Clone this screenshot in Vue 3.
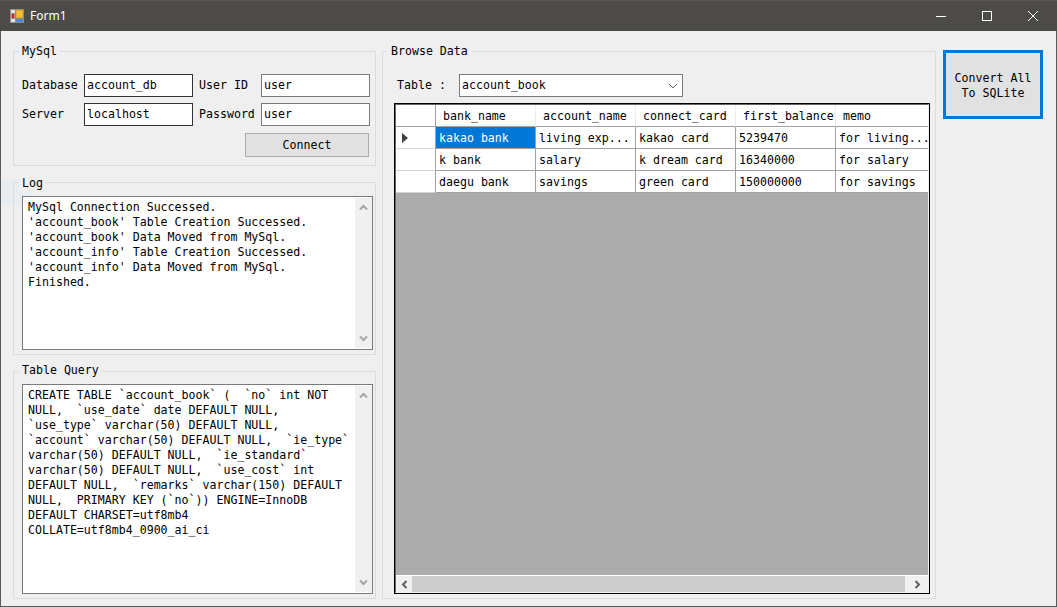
<script setup>
const logLines = [
  'MySql Connection Successed.',
  "'account_book' Table Creation Successed.",
  "'account_book' Data Moved from MySql.",
  "'account_info' Table Creation Successed.",
  "'account_info' Data Moved from MySql.",
  'Finished.'
]
const queryLines = [
  'CREATE TABLE `account_book` (  `no` int NOT',
  'NULL,  `use_date` date DEFAULT NULL,',
  '`use_type` varchar(50) DEFAULT NULL,',
  '`account` varchar(50) DEFAULT NULL,  `ie_type`',
  'varchar(50) DEFAULT NULL,  `ie_standard`',
  'varchar(50) DEFAULT NULL,  `use_cost` int',
  'DEFAULT NULL,  `remarks` varchar(150) DEFAULT',
  'NULL,  PRIMARY KEY (`no`)) ENGINE=InnoDB',
  'DEFAULT CHARSET=utf8mb4',
  'COLLATE=utf8mb4_0900_ai_ci'
]
const columns = ['bank_name', 'account_name', 'connect_card', 'first_balance', 'memo']
const rows = [
  ['kakao bank', 'living exp...', 'kakao card', '5239470', 'for living...'],
  ['k bank', 'salary', 'k dream card', '16340000', 'for salary'],
  ['daegu bank', 'savings', 'green card', '150000000', 'for savings']
]
</script>

<template>
  <div class="win">
    <div class="patch"></div>
    <header class="titlebar">
      <svg class="appicon" width="14" height="14" viewBox="0 0 14 14">
        <rect x="0.5" y="0.5" width="13" height="13" fill="#e4e4e4" stroke="#8f8f8f" />
        <path d="M0.5 4.5H6M5.5 0.5V13.5M0.5 9.5H13.5" stroke="#8f8f8f" fill="none" />
        <rect x="1.5" y="5" width="3" height="4" fill="#c8281e" />
        <rect x="6" y="1" width="7" height="8" fill="#f6bd2c" stroke="#b98a16" stroke-width="0.6" />
        <rect x="6" y="10" width="7" height="3" fill="#4f86d8" />
      </svg>
      <span class="title">Form1</span>
      <div class="controls">
        <div class="ctl">
          <svg width="12" height="12" viewBox="0 0 12 12"><path d="M1 6.5H11" stroke="#fff" fill="none" /></svg>
        </div>
        <div class="ctl">
          <svg width="12" height="12" viewBox="0 0 12 12"><rect x="1.5" y="1.5" width="9" height="9" stroke="#fff" fill="none" /></svg>
        </div>
        <div class="ctl">
          <svg width="12" height="12" viewBox="0 0 12 12"><path d="M1 1L11 11M11 1L1 11" stroke="#fff" fill="none" /></svg>
        </div>
      </div>
    </header>

    <main class="body">
      <div class="left">
        <section class="group mysql">
          <span class="legend">MySql</span>
          <div class="form">
            <label>Database</label>
            <div class="input dark">account_db</div>
            <label class="second">User ID</label>
            <div class="input">user</div>
            <label>Server</label>
            <div class="input dark">localhost</div>
            <label class="second">Password</label>
            <div class="input">user</div>
          </div>
          <div class="connect-row"><button class="btn connect">Connect</button></div>
        </section>

        <section class="group log">
          <span class="legend">Log</span>
          <div class="memo log-memo">
            <div class="memo-text">
              <div v-for="l in logLines" :key="l + 'x'" class="line">{{ l }}</div>
            </div>
            <div class="vscroll">
              <svg width="9" height="7" viewBox="0 0 9 7"><path d="M1 5.5L4.5 2L8 5.5" stroke="#a6a6a6" stroke-width="2" fill="none" /></svg>
              <svg width="9" height="7" viewBox="0 0 9 7"><path d="M1 1.5L4.5 5L8 1.5" stroke="#a6a6a6" stroke-width="2" fill="none" /></svg>
            </div>
          </div>
        </section>

        <section class="group query">
          <span class="legend">Table Query</span>
          <div class="memo query-memo">
            <div class="memo-text">
              <div v-for="l in queryLines" :key="l" class="line">{{ l }}</div>
            </div>
            <div class="vscroll">
              <svg width="9" height="7" viewBox="0 0 9 7"><path d="M1 5.5L4.5 2L8 5.5" stroke="#a6a6a6" stroke-width="2" fill="none" /></svg>
              <svg width="9" height="7" viewBox="0 0 9 7"><path d="M1 1.5L4.5 5L8 1.5" stroke="#a6a6a6" stroke-width="2" fill="none" /></svg>
            </div>
          </div>
        </section>
      </div>

      <section class="group browse">
        <span class="legend">Browse Data</span>
        <div class="table-row">
          <label class="table-label">Table :</label>
          <div class="combo">
            <span>account_book</span>
            <svg width="10" height="6" viewBox="0 0 10 6"><path d="M1 1L5 5L9 1" stroke="#606060" fill="none" /></svg>
          </div>
        </div>
        <div class="grid">
          <div class="grid-inner">
            <div class="grow header">
              <div class="rowhead"></div>
              <div v-for="c in columns" :key="c" class="hcell">{{ c }}</div>
            </div>
            <div v-for="(r, i) in rows" :key="i" class="grow">
              <div class="rowhead">
                <span v-if="i === 0" class="marker"></span>
              </div>
              <div
                v-for="(v, j) in r"
                :key="j"
                class="cell"
                :class="{ selected: i === 0 && j === 0 }"
              >{{ v }}</div>
            </div>
            <div class="empty"></div>
            <div class="hscroll">
              <div class="harrow">
                <svg width="7" height="9" viewBox="0 0 7 9"><path d="M5.5 1L2 4.5L5.5 8" stroke="#606060" stroke-width="2" fill="none" /></svg>
              </div>
              <div class="thumb"></div>
              <div class="harrow right">
                <svg width="7" height="9" viewBox="0 0 7 9"><path d="M1.5 1L5 4.5L1.5 8" stroke="#606060" stroke-width="2" fill="none" /></svg>
              </div>
            </div>
          </div>
        </div>
      </section>

      <button class="btn convert">Convert All<br />To SQLite</button>
    </main>
  </div>
</template>

<style>
html, body { margin: 0; padding: 0; background: #efefef; overflow: hidden; }
</style>

<style scoped>
.win {
  position: relative;
  box-sizing: border-box;
  width: 1057px;
  height: 607px;
  display: flex;
  flex-direction: column;
  background: #efefef;
  border: 1px solid #5a5a58;
  border-top: 0;
  font-family: "DejaVu Sans Mono", "Liberation Mono", monospace;
  font-size: 11.6px;
  line-height: 15px;
  color: #000;
}
.patch {
  position: absolute;
  left: 0;
  top: 180px;
  width: 31px;
  height: 25px;
  background: #e8edf1;
}
.titlebar {
  box-sizing: border-box;
  height: 31px;
  flex: none;
  margin: 0 -1px;
  background: #4d4b48;
  border-top: 1px solid #5a5856;
  display: flex;
  align-items: center;
  padding-left: 10px;
  color: #fff;
}
.appicon { flex: none; margin-top: -1px; }
.title {
  margin-left: 6px;
  font-family: "Noto Sans", "Open Sans", sans-serif;
  font-size: 12px;
  margin-top: -1px;
}
.controls { margin-left: auto; display: flex; margin-right: 1px; }
.ctl {
  width: 46px;
  height: 30px;
  display: flex;
  align-items: center;
  justify-content: center;
  margin-top: -1px;
}
.body {
  flex: 1;
  min-height: 0;
  display: flex;
  align-items: flex-start;
  padding: 20px 0 0 12px;
}
.left {
  width: 363px;
  flex: none;
  display: flex;
  flex-direction: column;
  gap: 16px;
}
.group {
  position: relative;
  box-sizing: border-box;
  border: 1px solid #dcdcdc;
}
.legend {
  position: absolute;
  left: 5px;
  top: -8px;
  padding: 0 3px;
  background: #efefef;
  white-space: nowrap;
}
.log .legend { top: -7px; }
.query .legend { top: -9px; }
.mysql { height: 115px; padding: 22px 0 0 8px; }
.log { height: 173px; padding: 13px 0 0 8px; }
.query { height: 228px; padding: 12px 0 0 8px; }
.form {
  display: grid;
  grid-template-columns: 62px 109px 68px 109px;
  grid-auto-rows: 23px;
  row-gap: 6px;
  align-items: center;
}
.form label { white-space: nowrap; }
.form .second { padding-left: 6px; }
.input {
  box-sizing: border-box;
  height: 23px;
  background: #fff;
  border: 1px solid #7a7a7a;
  padding: 3px 0 0 2px;
}
.input.dark { border-color: #333; }
.connect-row { display: flex; padding: 7px 0 0 223px; }
.btn {
  font: inherit;
  color: #000;
  background: #e1e1e1;
  border: 1px solid #adadad;
  padding: 0;
  margin: 0;
  border-radius: 0;
}
.connect { width: 124px; height: 24px; }
.memo {
  box-sizing: border-box;
  width: 351px;
  background: #fff;
  border: 1px solid #7a7a7a;
  display: flex;
}
.log-memo { height: 154px; }
.query-memo { height: 210px; }
.memo-text { flex: 1; padding: 3px 0 0 5px; min-width: 0; }
.line { white-space: pre; }
.vscroll {
  width: 17px;
  margin: 1px 0;
  flex: none;
  background: #f0f0f0;
  display: flex;
  flex-direction: column;
  align-items: center;
  justify-content: space-between;
  padding: 6px 0;
  box-sizing: border-box;
}
.browse {
  flex: none;
  width: 554px;
  height: 548px;
  margin-left: 6px;
  padding: 22px 5px 4px 11px;
  display: flex;
  flex-direction: column;
}
.table-row { display: flex; align-items: center; height: 23px; }
.table-label { width: 62px; margin-left: 3px; flex: none; }
.combo {
  box-sizing: border-box;
  width: 224px;
  height: 23px;
  background: #fff;
  border: 1px solid #7a7a7a;
  display: flex;
  align-items: center;
  justify-content: space-between;
  padding: 0 4px 0 2px;
}
.grid {
  margin-top: 6px;
  flex: 1;
  min-height: 0;
  box-sizing: border-box;
  border: 1px solid #000;
  display: flex;
  overflow: hidden;
}
.grid-inner {
  flex: 1;
  min-width: 0;
  box-sizing: border-box;
  background: #fff;
  border-style: solid;
  border-width: 1px;
  border-color: #666 #f0f0f0 #f0f0f0 #666;
  display: flex;
  flex-direction: column;
  overflow: hidden;
}
.grow { display: flex; height: 22px; flex: none; }
.rowhead {
  box-sizing: border-box;
  width: 40px;
  flex: none;
  border-right: 1px solid #a0a0a0;
  border-bottom: 1px solid #d4d4d4;
  display: flex;
  align-items: center;
  padding-left: 6px;
}
.marker {
  width: 0;
  height: 0;
  border-left: 6px solid #404040;
  border-top: 5px solid transparent;
  border-bottom: 5px solid transparent;
}
.hcell, .cell {
  box-sizing: border-box;
  width: 100px;
  flex: none;
  border-bottom: 1px solid #a0a0a0;
  white-space: nowrap;
  overflow: hidden;
  line-height: 23px;
}
.hcell { padding-left: 7px; border-right: 1px solid #ececec; }
.cell { padding-left: 3px; border-right: 1px solid #a0a0a0; }
.header .rowhead { border-bottom-color: #a0a0a0; }
.selected { background: #0078d7; color: #fff; }
.empty { flex: 1; background: #ababab; }
.hscroll {
  flex: none;
  box-sizing: border-box;
  height: 17px;
  border-top: 1px solid #fff;
  background: #f0f0f0;
  display: flex;
  align-items: stretch;
}
.harrow {
  width: 16px;
  flex: none;
  display: flex;
  align-items: center;
  justify-content: center;
}
.harrow.right { width: 24px; margin-left: auto; }
.thumb { width: 493px; flex: none; background: #cdcdcd; }
.convert {
  box-sizing: border-box;
  flex: none;
  width: 100px;
  height: 69px;
  margin: -1px 0 0 7px;
  border: 3px solid #0078d7;
  padding-top: 2px;
  line-height: 15px;
}
</style>
